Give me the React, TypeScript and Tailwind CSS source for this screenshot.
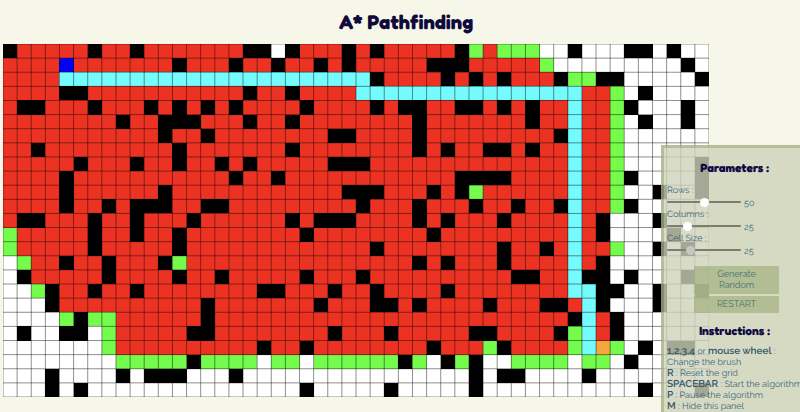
import { useState } from "react";

/* # wall, r closed, g open, c path, b start, o end, . empty */
const ROWS = [
  "#rrrrr#rr#rrrrrr" + "r##.#rrr#r#rrrrr#" + "grggg..#...##.#..",
  "rrrrbrrrrrrr#rrr" + "#rr#rr#r#rrrrr###" + "rrrrrg.........#.",
  "rrrrcccccccccccc" + "cccccccccc#rrrr#r" + "#r#rrr#gg##.....#",
  "rrrr##rrrrrrrrrr" + "r#rr#rrrrcccccccc" + "ccccccccrrg.#....",
  "r##rrr#rrr#r#r#r" + "#rrrr#rrrr#r##rr#" + "#r#r#rrcrrg#...#.",
  "rrrrrrrr#rr###rr" + "r#rr#rrrrrrrr#rrr" + "rrrr#rrcrrg.#..#.",
  "rrrrrrrrrrr#rr#r" + "rrrrrrr##rrrr#rrr" + "rrrrrr#crrg......",
  "rr#rrrrrrrrr#rrr" + "rrrr#rrrrrrrr#r#r" + "r##r#rrcrrg......",
  "rrrrr#rrr#rr#rr#" + "r#rrrrr###rrrrrrr" + "rrrrrrrcrrg.....#",
  "rrrr#rrrrrrrrrrr" + "#rr#rrrrrrrrrrrr#" + "###rrrrcrrg#....#",
  "rrrr#rrrrrr#rrrr" + "rrrrrrrr###rrr#r#" + "grrrrrrcrrg..#..#",
  "rrrr#rr#r###rr##" + "rrrrrrrrr#rrr#rrr" + "#rr#rr#crrg#.....",
  "r##rrr#rr#rrr#rr" + "rrrr#r###rrrr#r#r" + "rr#rrrrcr#...#...",
  "grrrrr#rr#rr#rrr" + "rrrrr#rrrrrrrr#rr" + "rrrrrrrcr#....#..",
  "grrrrr#rrrrr#rrr" + "rrrrrrrrrr#rrrrrr" + "rr#rr#rcrrg..#.#.",
  ".grr#rr#rrr#grrr" + "rrrrrrrrrrrrr#r#r" + "rr#rrrrcr#.......",
  ".#rrrrr#rrrr#rr#" + "rrrrr#rrr#rrrrrrr" + "rrr##rrc##.#...#.",
  "..g#rr#rr#rrrrrr" + "rr##rrr#rr#rrrr#r" + "rrrrrrrcc##..#..#",
  "...#rrrrrrrrrr#r" + "rrrrrr#rrr##r#rrr" + "r#rrr##rc#...#...",
  "....g#ggrrrrrr#r" + "rrrrrrrrrrrrrrrrr" + "rrrrrrr#cr#......",
  ".#..##.grrrrr##r" + "rrrrrrr#rrr#rrrrr" + "##rrrr#gcr#......",
  ".......grrrrrrrr" + "rr#rr#rrrrrrrr#rr" + "rg#rrrrgcog.#.##.",
  "........ggggg#gg" + "gg.gg.gggggg#g.#g" + "#..gggg.gg.#.....",
  "...#....#.###..." + "#................" + "#.##....#........",
  "...#.#.........." + ".....#.....#....." + "#...........#...#",
];

const FILLS: Record<string, string> = {
  "#": "fill-black",
  r: "fill-[#ec3323]",
  g: "fill-[#74fb4c]",
  c: "fill-[#75fbfd]",
  b: "fill-[#0000f5]",
  o: "fill-[#f2a63c]",
  ".": "fill-white",
};

const SIZE = 25;

function Board() {
  const columns = ROWS[0].length;
  const width = columns * SIZE;
  const height = ROWS.length * SIZE;
  const lines =
    Array.from({ length: columns + 1 }, (_, i) => `M${i * SIZE} 0V${height}`).join("") +
    ROWS.concat("").map((_, i) => `M0 ${i * SIZE}H${width}`).join("");
  return (
    <svg
      viewBox={`0 0 ${width} ${height}`}
      role="img"
      aria-label="Pathfinding grid"
      className="ml-[3px] block w-[706px] shrink-0"
    >
      {ROWS.map((row, y) =>
        (row.match(/(.)\1*/g) ?? []).reduce<{ x: number; nodes: React.ReactNode[] }>(
          (acc, run) => {
            acc.nodes.push(
              <rect
                key={`${acc.x}-${y}`}
                x={acc.x * SIZE}
                y={y * SIZE}
                width={run.length * SIZE}
                height={SIZE}
                shapeRendering="crispEdges"
                className={FILLS[run[0]]}
              />,
            );
            acc.x += run.length;
            return acc;
          },
          { x: 0, nodes: [] },
        ).nodes,
      )}
      <path d={lines} strokeWidth={1.2} className="fill-none stroke-black/65" />
    </svg>
  );
}

type SliderProps = {
  id: string;
  label: string;
  min: number;
  max: number;
  initial: number;
  thumb?: string;
};

function Slider({ id, label, min, max, initial, thumb = "[&::-webkit-slider-thumb]:bg-white" }: SliderProps) {
  const [value, setValue] = useState(initial);
  return (
    <div>
      <label htmlFor={id} className="block h-3 leading-[14px]">
        {label} :
      </label>
      <div className="flex h-3 items-center gap-[3px]">
        <input
          id={id}
          type="range"
          min={min}
          max={max}
          value={value}
          onChange={(e) => setValue(Number(e.target.value))}
          className={`h-[2px] w-[74px] appearance-none rounded-full bg-[#7c7e70] [&::-webkit-slider-thumb]:size-[9px] [&::-webkit-slider-thumb]:appearance-none [&::-webkit-slider-thumb]:rounded-full ${thumb}`}
        />
        <output htmlFor={id} className="pt-1 leading-3">
          {value}
        </output>
      </div>
    </div>
  );
}

const BUTTON = "w-[85px] bg-[#a4b07f]/70 py-[3px] text-center text-[9px] leading-[11px] text-[#44707c]";
const HEADING =
  "text-center font-['Fredoka','Lexend','Quicksand','Inter',sans-serif] text-[12px] leading-4 font-extrabold text-[#100a45]";

function Key({ children }: { children: React.ReactNode }) {
  return <span className="text-[10px] leading-none font-semibold text-[#34586a]">{children}</span>;
}

export default function App() {
  return (
    <div className="relative h-screen overflow-hidden bg-[#f7f7e9] font-['Raleway','Open_Sans',sans-serif] text-[9px] text-[#3c677c] [text-rendering:geometricPrecision]">
      <h1 className="pt-1 pb-1 pl-3 text-center font-['Fredoka','Lexend','Quicksand','Inter',sans-serif] text-[20px] leading-[36px] font-extrabold text-[#100a3c]">
        A* Pathfinding
      </h1>
      <Board />
      <aside className="absolute top-[145px] -right-2 w-[147px] border-[3px] border-[#a5ae85]/80 bg-[#cdd2b9]/80 bg-clip-padding pt-3 pb-6">
        <h2 className={HEADING}>Parameters :</h2>
        <div className="mt-2 pl-[3px]">
          <Slider id="rows" label="Rows" min={0} max={100} initial={50} />
          <Slider id="columns" label="Columns" min={0} max={100} initial={25} />
          <Slider
            id="cell-size"
            label="Cell Size"
            min={5}
            max={75}
            initial={25}
            thumb="[&::-webkit-slider-thumb]:bg-[#c6c6c6]"
          />
        </div>
        <div className="mt-[10px] flex flex-col items-center gap-[2px] pl-1">
          <button type="button" className={BUTTON}>
            Generate
            <br />
            Random
          </button>
          <button type="button" className={BUTTON}>
            RESTART
          </button>
        </div>
        <h2 className={`${HEADING} mt-[10px]`}>Instructions :</h2>
        <div className="mt-2 pl-[3px] leading-[11px] whitespace-nowrap">
          <p>
            <Key>1,2,3,4</Key> or <Key>mouse wheel</Key> :
            <br />
            Change the brush
          </p>
          <p>
            <Key>R</Key> : Reset the grid
          </p>
          <p>
            <Key>SPACEBAR</Key> : Start the algorithm
          </p>
          <p>
            <Key>P</Key> : Pause the algorithm
          </p>
          <p>
            <Key>M</Key> : Hide this panel
          </p>
        </div>
      </aside>
    </div>
  );
}
